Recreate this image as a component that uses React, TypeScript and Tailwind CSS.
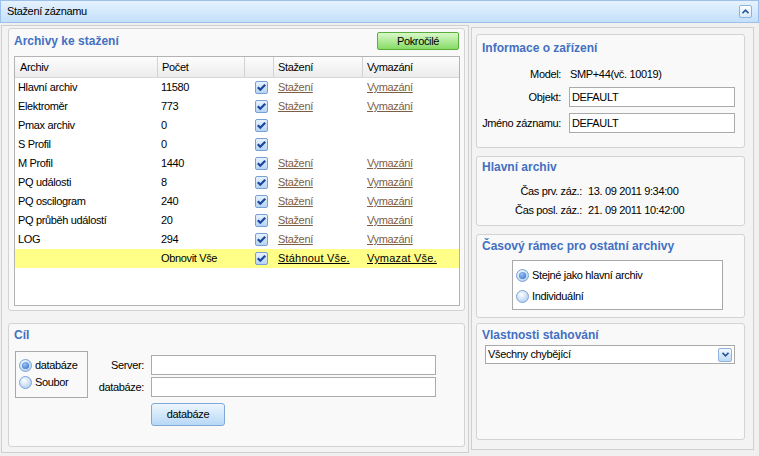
import React from "react";

const rows = [
  { name: "Hlavní archiv", count: "11580", links: true },
  { name: "Elektroměr", count: "773", links: true },
  { name: "Pmax archiv", count: "0", links: false },
  { name: "S Profil", count: "0", links: false },
  { name: "M Profil", count: "1440", links: true },
  { name: "PQ události", count: "8", links: true },
  { name: "PQ oscilogram", count: "240", links: true },
  { name: "PQ průběh událostí", count: "20", links: true },
  { name: "LOG", count: "294", links: true },
];

const grid = "grid grid-cols-[143px_87px_29px_89px_94px]";

function CheckBox() {
  return (
    <svg width="13" height="13" viewBox="0 0 13 13" className="block">
      <defs>
        <linearGradient id="cbg" x1="0" y1="0" x2="0" y2="1">
          <stop offset="0" stopColor="#eaf3fe" />
          <stop offset="1" stopColor="#b5d2f2" />
        </linearGradient>
      </defs>
      <rect x="0.5" y="0.5" width="12" height="12" rx="1.5" fill="url(#cbg)" stroke="#78a0d2" />
      <path d="M2.8 6.2 L5.3 8.7 L10.2 3.8" fill="none" stroke="#1a48a0" strokeWidth="2.3" />
    </svg>
  );
}

function Radio({ checked }: { checked?: boolean }) {
  return (
    <svg width="13" height="13" viewBox="0 0 13 13" className="block shrink-0">
      <defs>
        <radialGradient id="rdg" cx="0.4" cy="0.35" r="0.75">
          <stop offset="0" stopColor="#ffffff" />
          <stop offset="1" stopColor="#a8c9ee" />
        </radialGradient>
        <radialGradient id="rdd" cx="0.4" cy="0.35" r="0.7">
          <stop offset="0" stopColor="#9cc3f2" />
          <stop offset="1" stopColor="#3f7cd2" />
        </radialGradient>
      </defs>
      <circle cx="6.5" cy="6.5" r="6" fill="url(#rdg)" stroke="#7ea4d3" />
      {checked && <circle cx="6.5" cy="6.5" r="3.6" fill="url(#rdd)" />}
    </svg>
  );
}

function Panel({ className, children }: { className: string; children: React.ReactNode }) {
  return (
    <div className={"flex flex-col rounded-[3px] border border-[#d3d3d3] bg-[#f9f9f9] " + className}>
      {children}
    </div>
  );
}

function Title({ children }: { children: React.ReactNode }) {
  return (
    <div className="h-[14px] pl-[5px] text-[12px] leading-[14px] font-bold tracking-normal text-[#4370c2] whitespace-nowrap">
      {children}
    </div>
  );
}

function Input({ value, className }: { value?: string; className: string }) {
  return (
    <div className={"h-[20px] border border-[#ababab] bg-white pl-[2px] text-[11px] leading-[18px] " + className}>
      {value}
    </div>
  );
}

export default function App() {
  return (
    <div className="h-[456px] w-[759px] overflow-hidden bg-[#f0f0f0] font-['Liberation_Sans',Arial,sans-serif] text-[11px] tracking-[-0.35px] text-black">
      {/* title bar */}
      <div className="flex h-[23px] items-center justify-between border border-[#9cc0ea] bg-gradient-to-b from-[#e6f2fe] to-[#c3e0fa] pl-[6px] pr-[6px]">
        <span className="text-[11px] leading-none">Stažení záznamu</span>
        <div className="flex h-[13px] w-[13px] items-center justify-center rounded-[2px] border border-[#8fb2dd] bg-gradient-to-b from-white to-[#d7e9fb]">
          <svg width="7" height="5" viewBox="0 0 7 5">
            <path d="M0.5 4.2 L3.5 1.2 L6.5 4.2" fill="none" stroke="#23559f" strokeWidth="1.6" />
          </svg>
        </div>
      </div>

      <div className="flex gap-[2px] pl-[1px]">
        {/* left column */}
        <div className="mt-[2px] flex h-[428px] w-[468px] flex-col gap-[12px] border border-[#cfcfcf] bg-[#f3f3f3] pl-[6px] pt-[2px]">
          <Panel className="h-[283px] w-[457px] pt-[3px]">
            <div className="flex h-[18px] items-center justify-between pr-[5px]">
              <Title>Archivy ke stažení</Title>
              <div className="flex h-[18px] w-[82px] items-center justify-center rounded-[2px] border border-[#5aae3c] bg-gradient-to-b from-[#d9f8c8] to-[#85db62] text-[11px]">
                Pokročilé
              </div>
            </div>
            <div className="ml-[5px] mt-[6px] h-[250px] w-[446px] border border-[#b3b3b3] bg-white">
              <div className={grid + " h-[21px] border-b border-[#d7d7d7] bg-gradient-to-b from-[#fdfdfd] to-[#ececec]"}>
                <div className="flex items-center border-r border-[#d3d3d3] pl-[5px]">Archiv</div>
                <div className="flex items-center border-r border-[#d3d3d3] pl-[4px]">Počet</div>
                <div className="border-r border-[#d3d3d3]" />
                <div className="flex items-center border-r border-[#d3d3d3] pl-[4px]">Stažení</div>
                <div className="flex items-center pl-[4px]">Vymazání</div>
              </div>
              {rows.map((r) => (
                <div key={r.name} className={grid + " h-[19px] items-center"}>
                  <div className="pl-[3px] whitespace-nowrap">{r.name}</div>
                  <div className="pl-[3px]">{r.count}</div>
                  <div className="pl-[10px]">
                    <CheckBox />
                  </div>
                  <div className="pl-[4px] text-[#7c5d45] underline">{r.links ? "Stažení" : ""}</div>
                  <div className="pl-[4px] text-[#7c5d45] underline">{r.links ? "Vymazání" : ""}</div>
                </div>
              ))}
              <div className={grid + " h-[19px] items-center bg-[#ffff88]"}>
                <div />
                <div className="pl-[3px]">Obnovit Vše</div>
                <div className="pl-[10px]">
                  <CheckBox />
                </div>
                <div className="pl-[4px] underline tracking-[0.2px]">Stáhnout Vše.</div>
                <div className="pl-[4px] underline tracking-[0.2px]">Vymazat Vše.</div>
              </div>
            </div>
          </Panel>

          <Panel className="h-[124px] w-[457px] pt-[4px]">
            <Title>Cíl</Title>
            <div className="mt-[9px] flex">
              <div className="ml-[6px] h-[47px] w-[73px] border border-[#a9a9a9] pl-[3px] pt-[5px]">
                <div className="flex h-[17px] items-center gap-[3px]">
                  <Radio checked />
                  <span>databáze</span>
                </div>
                <div className="flex h-[17px] items-center gap-[3px]">
                  <Radio />
                  <span>Soubor</span>
                </div>
              </div>
              <div className="mt-[4px] flex flex-col">
                <div className="flex items-center gap-[7px]">
                  <span className="w-[56px] text-right">Server:</span>
                  <Input className="w-[285px]" />
                </div>
                <div className="mt-[2px] flex items-center gap-[7px]">
                  <span className="w-[56px] text-right">databáze:</span>
                  <Input className="w-[285px]" />
                </div>
                <div className="ml-[63px] mt-[6px] flex h-[23px] w-[74px] items-center justify-center rounded-[3px] border border-[#7ea8d8] bg-gradient-to-b from-[#eef6fe] to-[#b7d8f6]">
                  databáze
                </div>
              </div>
            </div>
          </Panel>
        </div>

        {/* right column */}
        <div className="mt-[4px] flex h-[423px] w-[283px] flex-col border border-[#cfcfcf] bg-[#f3f3f3] pl-[4px] pt-[6px]">
          <Panel className="h-[114px] w-[269px] pt-[6px]">
            <Title>Informace o zařízení</Title>
            <div className="mt-[10px] flex h-[19px] items-center">
              <span className="w-[84px] text-right">Model:</span>
              <span className="ml-[9px]">SMP+44(vč. 10019)</span>
            </div>
            <div className="mt-[3px] flex items-center">
              <span className="w-[84px] text-right">Objekt:</span>
              <Input value="DEFAULT" className="ml-[8px] w-[166px]" />
            </div>
            <div className="mt-[6px] flex items-center">
              <span className="w-[84px] text-right whitespace-nowrap">Jméno záznamu:</span>
              <Input value="DEFAULT" className="ml-[8px] w-[166px]" />
            </div>
          </Panel>

          <Panel className="mt-[8px] h-[70px] w-[269px] pt-[3px]">
            <Title>Hlavní archiv</Title>
            <div className="mt-[8px] flex h-[19px] items-center">
              <span className="w-[105px] text-right">Čas prv. záz.:</span>
              <span className="ml-[6px]">13. 09 2011 9:34:00</span>
            </div>
            <div className="flex h-[19px] items-center">
              <span className="w-[105px] text-right">Čas posl. záz.:</span>
              <span className="ml-[6px]">21. 09 2011 10:42:00</span>
            </div>
          </Panel>

          <Panel className="mt-[8px] h-[84px] w-[269px] pt-[4px]">
            <Title>Časový rámec pro ostatní archivy</Title>
            <div className="ml-[35px] mt-[7px] h-[50px] w-[211px] border border-[#a9a9a9] bg-white pl-[3px] pt-[4px]">
              <div className="flex h-[21px] items-center gap-[3px]">
                <Radio checked />
                <span>Stejné jako hlavní archiv</span>
              </div>
              <div className="flex h-[21px] items-center gap-[3px]">
                <Radio />
                <span>Individuální</span>
              </div>
            </div>
          </Panel>

          <Panel className="mt-[5px] h-[117px] w-[269px] pt-[4px]">
            <Title>Vlastnosti stahování</Title>
            <div className="ml-[8px] mt-[3px] flex h-[19px] w-[250px] items-center justify-between border border-[#a9a9a9] bg-white pl-[2px] pr-[2px]">
              <span>Všechny chybějící</span>
              <div className="flex h-[14px] w-[14px] items-center justify-center rounded-[2px] border border-[#8fb2dd] bg-gradient-to-b from-[#f2f8fe] to-[#bcd9f5]">
                <svg width="7" height="5" viewBox="0 0 7 5">
                  <path d="M0.5 0.8 L3.5 3.8 L6.5 0.8" fill="none" stroke="#23559f" strokeWidth="1.6" />
                </svg>
              </div>
            </div>
          </Panel>
        </div>
      </div>
    </div>
  );
}
